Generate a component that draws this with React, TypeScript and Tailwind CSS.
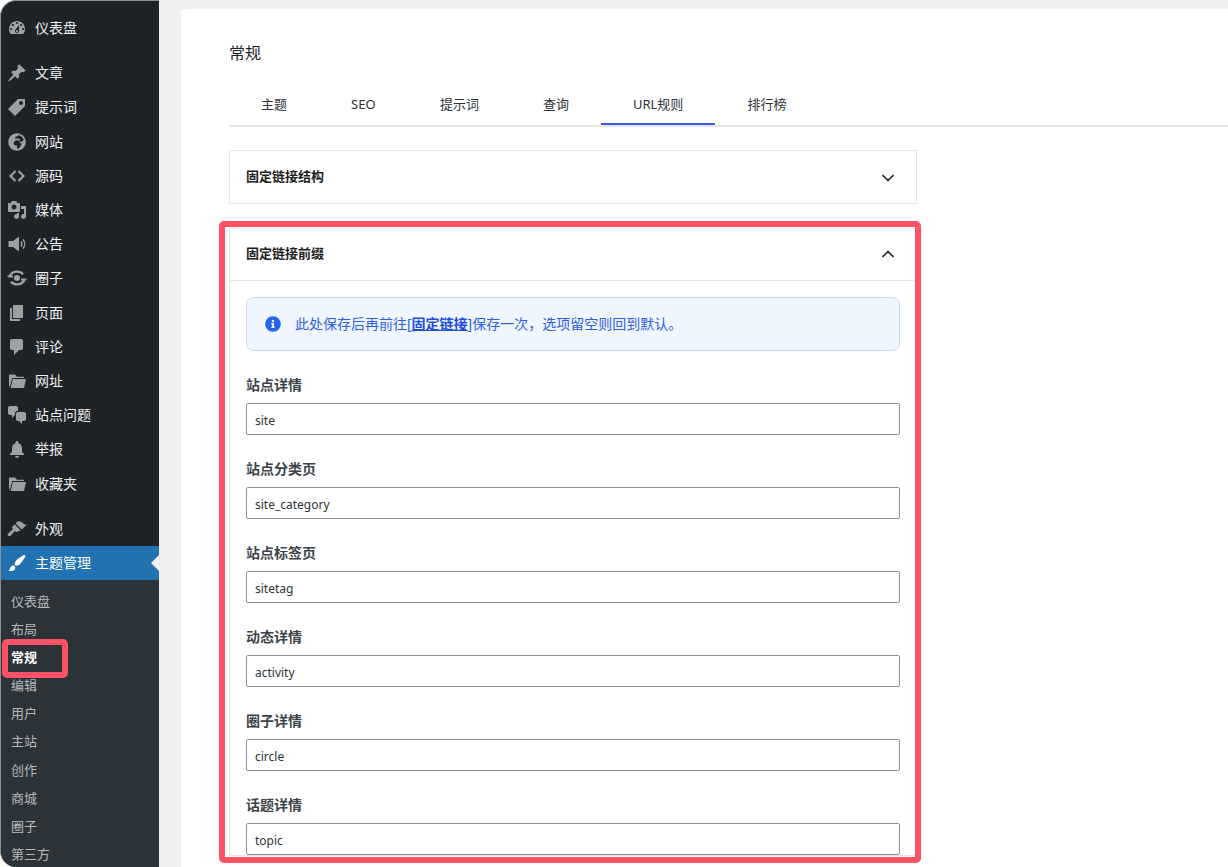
import { FaGlobeAfrica, FaInfoCircle } from "react-icons/fa";
import { ChevronDown, ChevronUp } from "lucide-react";
import type { ReactNode } from "react";

const Dash = ({ d, extra }: { d?: string; extra?: ReactNode }) => (
  <svg viewBox="0 0 20 20" className="w-5 h-5" fill="currentColor">
    {d && <path d={d} />}
    {extra}
  </svg>
);

const folderPath = "M2 3.5h6l2 2.2h7V7H5.2L3 15.5H2zM5.8 8H19l-2 9H3.6z";

const icons: Record<string, ReactNode> = {
  dashboard: <Dash d="M3.76 16h12.48c1.1-1.37 1.76-3.11 1.76-5 0-4.42-3.58-8-8-8s-8 3.58-8 8c0 1.89.66 3.63 1.76 5zM10 4c.55 0 1 .45 1 1s-.45 1-1 1-1-.45-1-1 .45-1 1-1zM6 6c.55 0 1 .45 1 1s-.45 1-1 1-1-.45-1-1 .45-1 1-1zm8 0c.55 0 1 .45 1 1s-.45 1-1 1-1-.45-1-1 .45-1 1-1zm-5.37 5.55L12 7v6c0 1.1-.9 2-2 2s-2-.9-2-2c0-.57.24-1.08.63-1.45zM4 10c.55 0 1 .45 1 1s-.45 1-1 1-1-.45-1-1 .45-1 1-1zm12 0c.55 0 1 .45 1 1s-.45 1-1 1-1-.45-1-1 .45-1 1-1zm-5 3c0-.55-.45-1-1-1s-1 .45-1 1 .45 1 1 1 1-.45 1-1z" />,
  pin: <Dash d="M10.44 3.02l1.82-1.82 6.36 6.35-1.83 1.82c-1.05-.68-2.48-.57-3.41.36l-.75.75c-.92.93-1.04 2.35-.35 3.41l-1.83 1.82-2.41-2.41-2.8 2.79c-.42.42-3.38 2.71-3.8 2.29s1.86-3.39 2.28-3.81l2.79-2.79L4.1 9.36l1.83-1.82c1.05.69 2.48.57 3.4-.36l.75-.75c.93-.92 1.05-2.35.36-3.41z" />,
  tag: <Dash d="M11 2h7v7L8 19l-7-7zm3 6c1.1 0 2-.9 2-2s-.9-2-2-2-2 .9-2 2 .9 2 2 2z" />,
  globe: <FaGlobeAfrica className="w-[18px] h-[18px]" />,
  code: <Dash d="M9 6l-4 4 4 4-1 2-6-6 6-6zm2 8l4-4-4-4 1-2 6 6-6 6z" />,
  media: <Dash d="M13 11V4c0-.55-.45-1-1-1h-1.67L9 1H5L3.67 3H2c-.55 0-1 .45-1 1v7c0 .55.45 1 1 1h10c.55 0 1-.45 1-1zM7 4.5c1.38 0 2.5 1.12 2.5 2.5S8.38 9.5 7 9.5 4.5 8.38 4.5 7 5.62 4.5 7 4.5zM14 6h5v10.5c0 1.38-1.12 2.5-2.5 2.5S14 17.88 14 16.5s1.12-2.5 2.5-2.5c.17 0 .34.02.5.05V9h-3V6zm-4 8.05V13h2v3.5c0 1.38-1.12 2.5-2.5 2.5S7 17.88 7 16.5 8.12 14 9.5 14c.17 0 .34.02.5.05z" />,
  megaphone: (
    <Dash
      d="M1.5 7H6l6-4.5v15L6 13H1.5z"
      extra={
        <path
          d="M14 7.5c1.1 1.5 1.1 3.5 0 5M16 5.5c2.2 2.6 2.2 6.4 0 9"
          fill="none"
          stroke="currentColor"
          strokeWidth="1.4"
        />
      }
    />
  ),
  circle: (
    <Dash
      extra={
        <>
          <circle cx="10" cy="10" r="3" />
          <path
            d="M2.5 8.5C4 4.8 7 3.6 10 3.6s4.8 1 6 2.6M17.5 11.5C16 15.2 13 16.4 10 16.4s-4.8-1-6-2.6"
            fill="none"
            stroke="currentColor"
            strokeWidth="2.4"
          />
          <path d="M0 7.5h6v2H1.5zM14 10.5h6l-1.5 2H14z" />
        </>
      }
    />
  ),
  page: <Dash d="M6 15V2h10v13H6zm-1 1h8v2H3V5h2v11z" />,
  comment: <Dash d="M5 2h9c1.1 0 2 .9 2 2v7c0 1.1-.9 2-2 2h-2l-5 5v-5H5c-1.1 0-2-.9-2-2V4c0-1.1.9-2 2-2z" />,
  folder: <Dash d={folderPath} />,
  chat: <Dash d="M11 6h-.82C9.07 6 8 7.2 8 8.16V10l-3 3v-3H3c-1.1 0-2-.9-2-2V3c0-1.1.9-2 2-2h6c1.1 0 2 .9 2 2v3zm0 1h6c1.1 0 2 .9 2 2v5c0 1.1-.9 2-2 2h-2v3l-3-3h-1c-1.1 0-2-.9-2-2V9c0-1.1.9-2 2-2z" />,
  bell: <Dash d="M10 2c-.83 0-1.5.67-1.5 1.5v.68C6.21 4.84 5 6.8 5 9v4l-2 2v1h14v-1l-2-2V9c0-2.2-1.21-4.16-3.5-4.82V3.5C11.5 2.67 10.83 2 10 2zm-2 15a2 2 0 0 0 4 0z" />,
  appearance: (
    <Dash
      d="M14.8 10.6L8.6 4.4l2-1.9c.6-.5 2.2-.4 3.4.3 1.2.8 1.5 1.3 3 2.1 1 .6 1.9.9 2.9.7zM13.6 11.4L7.8 5.2 5.2 7.8c-.4.4-.4 1 0 1.4l.8.8-4.8 4.4c-.7.7-.7 1.8 0 2.4.7.7 1.8.6 2.4-.1l4.3-4.7.8.8c.4.4 1 .4 1.4 0z"
    />
  ),
  brush: <Dash d="M18.33 3.57s.27-.8-.31-1.36c-.53-.52-1.22-.24-1.22-.24-.61.3-5.76 3.47-7.67 5.57-.86.96-2.06 3.79-1.09 4.82.92.98 3.96-.17 4.79-1 2.06-2.06 5.21-7.17 5.5-7.79zM1.4 17.65c2.37-1.56 1.46-3.41 3.23-4.64.93-.65 2.22-.62 3.08.29.63.67.8 2.57-.16 3.46-1.57 1.45-4 1.55-6.15.89z" />,
};

const menuTop = [
  { icon: "pin", label: "文章" },
  { icon: "tag", label: "提示词" },
  { icon: "globe", label: "网站" },
  { icon: "code", label: "源码" },
  { icon: "media", label: "媒体" },
  { icon: "megaphone", label: "公告" },
  { icon: "circle", label: "圈子" },
  { icon: "page", label: "页面" },
  { icon: "comment", label: "评论" },
  { icon: "folder", label: "网址" },
  { icon: "chat", label: "站点问题" },
  { icon: "bell", label: "举报" },
  { icon: "folder", label: "收藏夹" },
];

const submenu = ["仪表盘", "布局", "常规", "编辑", "用户", "主站", "创作", "商城", "圈子", "第三方"];
const tabs = ["主题", "SEO", "提示词", "查询", "URL规则", "排行榜"];

const fields = [
  { label: "站点详情", value: "site" },
  { label: "站点分类页", value: "site_category" },
  { label: "站点标签页", value: "sitetag" },
  { label: "动态详情", value: "activity" },
  { label: "圈子详情", value: "circle" },
  { label: "话题详情", value: "topic" },
];

const MenuItem = ({ icon, label }: { icon: string; label: string }) => (
  <div className="flex items-center h-[34.2px] text-sm text-[#f0f0f1]">
    <span className="flex items-center justify-center w-5 h-5 ml-[6px] mr-[8px] text-[#9ca1a8]">{icons[icon]}</span>
    {label}
  </div>
);

const App = () => {
  return (
    <div className="relative flex h-[867px] overflow-hidden bg-white font-['Noto_Sans','Noto_Sans_CJK_SC',sans-serif]">
      <aside className="w-[159px] shrink-0 pt-[10px] bg-[#1d2327] border-l border-t border-[#8c8f94] rounded-l-[16px] overflow-hidden">
        <MenuItem icon="dashboard" label="仪表盘" />
        <div className="mt-[11px]">
          {menuTop.map((m) => (
            <MenuItem key={m.label + m.icon} icon={m.icon} label={m.label} />
          ))}
        </div>
        <div className="mt-[11.4px]">
          <MenuItem icon="appearance" label="外观" />
        </div>
        <div className="relative flex items-center h-[34.2px] text-sm text-white bg-[#2271b1]">
          <span className="flex items-center justify-center w-5 h-5 ml-[6px] mr-[8px]">{icons.brush}</span>
          主题管理
          <span className="absolute right-0 top-[9px] border-y-[8px] border-r-[8px] border-y-transparent border-r-[#f0f0f1]" />
        </div>
        <div className="h-full pt-[6.8px] bg-[#2c3338]">
          {submenu.map((s) => (
            <div
              key={s}
              className={`flex items-center h-[28.2px] pl-[10px] text-[13px] ${
                s === "常规" ? "font-bold text-white" : "text-[#b4b9be]"
              }`}
            >
              {s}
            </div>
          ))}
        </div>
      </aside>

      <div className="flex-1 min-w-0 pl-[22px] pt-[9px] bg-[#f0f0f1]">
        <main className="h-full pl-[48px] pt-[34px] bg-white rounded-tl-[4px]">
          <h1 className="h-[21px] text-base leading-[21px] font-normal text-[#1d2327]">常规</h1>
          <div className="flex mt-[21px] h-[42px] border-b-2 border-[#e6e6e6]">
            {tabs.map((t) => (
              <div
                key={t}
                className={`flex items-center h-[40px] pt-[2px] pl-[32px] text-[13px] text-[#2c3338] ${
                  t === "SEO" ? "pr-[32.4px]" : "pr-[32px]"
                } ${t === "URL规则" ? "border-b-2 border-[#3858e9]" : "border-b-2 border-transparent"}`}
              >
                {t}
              </div>
            ))}
          </div>

          <section className="mt-[23px] w-[688px]">
            <div className="flex items-center justify-between h-[54px] pl-[16px] pr-[18px] border border-[#e5e5e5] text-[13px] font-bold text-[#1e1e1e]">
              <span className="-mt-[1px]">固定链接结构</span>
              <ChevronDown className="w-5 h-5 mt-[1px] text-[#1e1e1e]" strokeWidth={2} />
            </div>

            <div className="mt-[24px] border border-[#e5e5e5]">
              <div className="flex items-center justify-between h-[52px] pl-[16px] pr-[18px] border-b border-[#e5e5e5] text-[13px] font-bold text-[#1e1e1e]">
                <span className="-mt-[1px]">固定链接前缀</span>
                <ChevronUp className="w-5 h-5 -mt-[1px] text-[#1e1e1e]" strokeWidth={2} />
              </div>
              <div className="px-[16px] pt-[16px]">
                <div className="flex items-center h-[54px] pl-[18px] rounded-lg bg-[#eff6ff] border border-[#bfdbfe] text-sm text-[#2f5fe0]">
                  <FaInfoCircle className="w-4 h-4 mr-[14px] text-[#2563eb]" />
                  <span>
                    此处保存后再前往[<a className="font-bold underline text-[#1d4ed8]">固定链接</a>]保存一次，选项留空则回到默认。
                  </span>
                </div>
                {fields.map((f) => (
                  <div key={f.value} className="mt-[24px]">
                    <label className="block h-[18px] leading-[20px] text-sm font-bold text-[#3c434a]">{f.label}</label>
                    <input
                      readOnly
                      defaultValue={f.value}
                      className="block w-full h-[32px] mt-[10px] px-[8px] pt-[2px] text-xs text-[#2c3338] bg-white border border-[#8c8f94] rounded-[2px] outline-none"
                    />
                  </div>
                ))}
              </div>
            </div>
          </section>
        </main>
      </div>

      {/* annotation frames drawn over the screenshot */}
      <div className="absolute left-[2px] top-[639px] w-[66px] h-[39px] border-[6px] border-[#ff5266] rounded-[5px]" />
      <div className="absolute left-[219px] top-[221px] w-[702px] h-[642px] border-[6px] border-[#ff5266] rounded-[5px]" />
    </div>
  );
};

export default App;
